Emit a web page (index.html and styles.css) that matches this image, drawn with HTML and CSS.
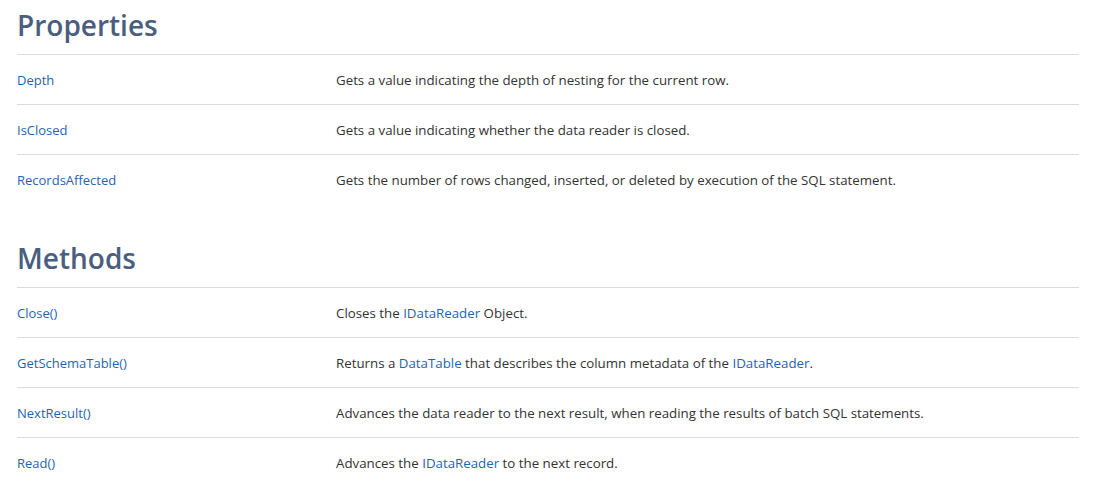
FILE: index.html
```html
<!DOCTYPE html>
<html>
<head>
<meta charset="utf-8">
<link rel="stylesheet" href="styles.css">
</head>
<body>
<div class="page">
  <section class="section">
    <h2 class="title">Properties</h2>
    <div class="row"><div class="name"><a href="#">Depth</a></div><div class="desc">Gets a value indicating the depth of nesting for the current row.</div></div>
    <div class="row"><div class="name"><a href="#">IsClosed</a></div><div class="desc">Gets a value indicating whether the data reader is closed.</div></div>
    <div class="row"><div class="name"><a href="#">RecordsAffected</a></div><div class="desc">Gets the number of rows changed, inserted, or deleted by execution of the SQL statement.</div></div>
  </section>
  <section class="section">
    <h2 class="title">Methods</h2>
    <div class="row"><div class="name"><a href="#">Close()</a></div><div class="desc">Closes the <a href="#">IDataReader</a> Object.</div></div>
    <div class="row"><div class="name"><a href="#">GetSchemaTable()</a></div><div class="desc">Returns a <a href="#">DataTable</a> that describes the column metadata of the <a href="#">IDataReader</a>.</div></div>
    <div class="row"><div class="name"><a href="#">NextResult()</a></div><div class="desc">Advances the data reader to the next result, when reading the results of batch SQL statements.</div></div>
    <div class="row"><div class="name"><a href="#">Read()</a></div><div class="desc">Advances the <a href="#">IDataReader</a> to the next record.</div></div>
  </section>
</div>
</body>
</html>
```
FILE: styles.css
```css
html, body {
  margin: 0;
  padding: 0;
  background: #fff;
}
body {
  font-family: "Open Sans", "Noto Sans", sans-serif;
  font-size: 13px;
  color: #333;
}
.page {
  width: 1062px;
  padding: 0 17px;
}
.section + .section {
  margin-top: 29px;
}
.title {
  margin: 0;
  height: 54px;
  box-sizing: border-box;
  padding-top: 6px;
  font-size: 28px;
  line-height: 38px;
  font-weight: 600;
  color: #4a5e80;
}
.row {
  display: flex;
  align-items: center;
  height: 50px;
  box-sizing: border-box;
  border-top: 1px solid #dcdcdc;
}
.name {
  width: 319px;
  flex: none;
}
.desc {
  flex: 1;
  font-size: 13.3px;
}
a {
  color: #1f64b2;
  text-decoration: none;
}
```
